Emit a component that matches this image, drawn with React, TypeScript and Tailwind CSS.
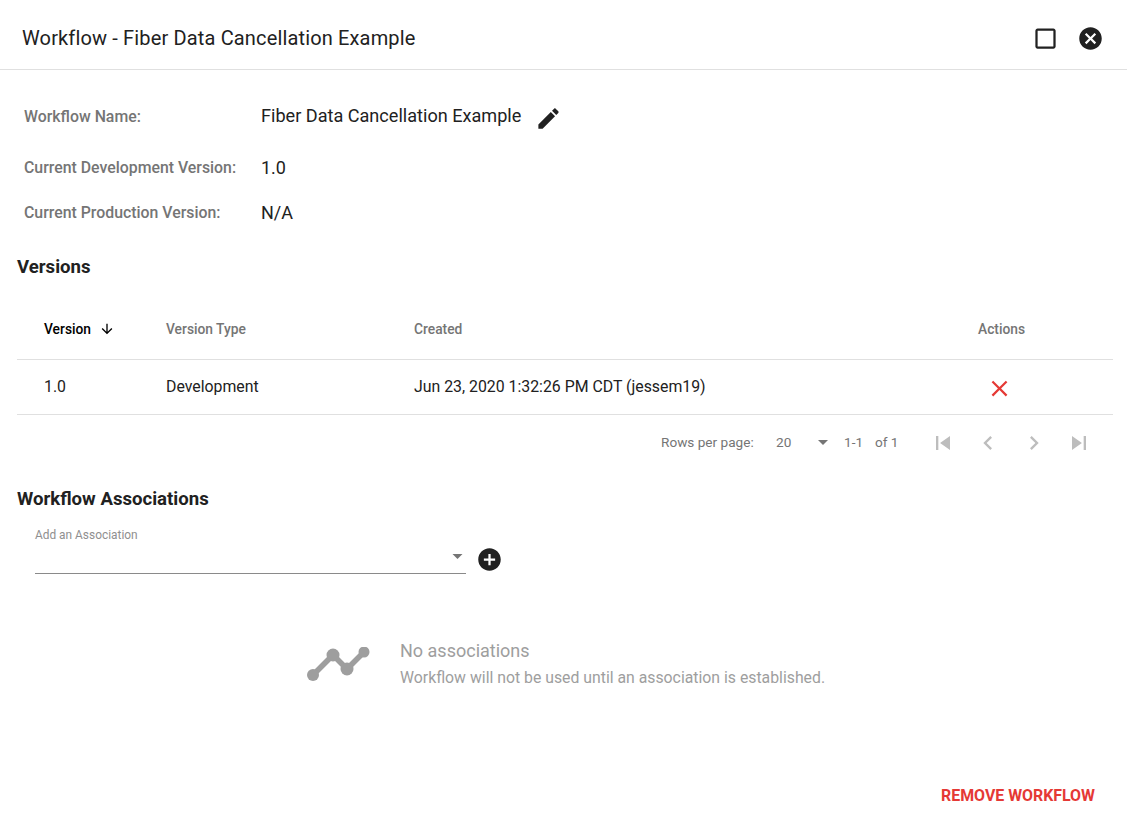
const icons = {
  edit: 'M3 17.25V21h3.75L17.81 9.94l-3.75-3.75L3 17.25zM20.71 7.04c.39-.39.39-1.02 0-1.41l-2.34-2.34c-.39-.39-1.02-.39-1.41 0l-1.83 1.83 3.75 3.75 1.83-1.83z',
  square: 'M19 5v14H5V5h14m0-2H5c-1.1 0-2 .9-2 2v14c0 1.1.9 2 2 2h14c1.1 0 2-.9 2-2V5c0-1.1-.9-2-2-2z',
  cancel: 'M12 2C6.47 2 2 6.47 2 12s4.47 10 10 10 10-4.47 10-10S17.53 2 12 2zm5 13.59L15.59 17 12 13.41 8.41 17 7 15.59 10.59 12 7 8.41 8.41 7 12 10.59 15.59 7 17 8.41 13.41 12 17 15.59z',
  close: 'M19 6.41L17.59 5 12 10.59 6.41 5 5 6.41 10.59 12 5 17.59 6.41 19 12 13.41 17.59 19 19 17.59 13.41 12z',
  arrowDown: 'M20 12l-1.41-1.41L13 16.17V4h-2v12.17l-5.58-5.59L4 12l8 8 8-8z',
  first: 'M6 6h2v12H6zm3.5 6l8.5 6V6z',
  prev: 'M15.41 7.41L14 6l-6 6 6 6 1.41-1.41L10.83 12z',
  next: 'M10 6L8.59 7.41 13.17 12l-4.58 4.59L10 18l6-6z',
  last: 'M6 18l8.5-6L6 6v12zM16 6v12h2V6h-2z',
  add: 'M12 2C6.48 2 2 6.48 2 12s4.48 10 10 10 10-4.48 10-10S17.52 2 12 2zm5 11h-4v4h-2v-4H7v-2h4V7h2v4h4v2z',
};

function Icon({ d, className }: { d: string; className: string }) {
  return (
    <svg viewBox="0 0 24 24" fill="currentColor" className={className}>
      <path d={d} />
    </svg>
  );
}

function InfoRow({ label, value, className }: { label: string; value: string; className: string }) {
  return (
    <div className={`flex items-center ${className}`}>
      <span className="w-[237px] text-[15.85px] font-medium text-[#757575]">{label}</span>
      <span className="-mt-[1px] text-[18px] text-[#212121]">{value}</span>
    </div>
  );
}

export default function App() {
  return (
    <div className="flex h-[830px] flex-col bg-white font-['Roboto',sans-serif] text-[#212121]">
      {/* Header */}
      <div className="flex h-[70px] shrink-0 items-center border-b border-[#e0e0e0] pl-[22px] pr-[23px] pt-[7px]">
        <h2 className="flex-1 text-[20px] leading-none tracking-[0.15px]">Workflow - Fiber Data Cancellation Example</h2>
        <Icon d={icons.square} className="h-[27px] w-[27px]" />
        <Icon d={icons.cancel} className="ml-[18px] h-[27px] w-[27px]" />
      </div>

      {/* Workflow details */}
      <div className="pl-[24px] pt-[30px]">
        <div className="flex h-[34px] items-center">
          <span className="w-[237px] text-[15.85px] font-medium text-[#757575]">Workflow Name:</span>
          <span className="-mt-[3px] text-[18.1px] text-[#212121]">Fiber Data Cancellation Example</span>
          <Icon d={icons.edit} className="ml-[14px] mt-[3px] h-[27px] w-[27px]" />
        </div>
        <InfoRow label="Current Development Version:" value="1.0" className="mt-[17px] h-[34px]" />
        <InfoRow label="Current Production Version:" value="N/A" className="mt-[11px] h-[34px]" />
      </div>

      {/* Versions */}
      <div className="mx-[14px] ml-[17px] mt-[25px]">
        <h3 className="text-[18.6px] font-bold leading-[24px] text-[#212121]">Versions</h3>
        <div className="mt-[9px] grid h-[72px] grid-cols-[122px_248px_564px_1fr] items-center border-b border-[#e0e0e0] pl-[27px] pt-[11px] text-[13.8px] font-medium text-[#757575]">
          <div className="flex items-center text-black">
            Version
            <Icon d={icons.arrowDown} className="ml-[8px] h-[16px] w-[16px]" />
          </div>
          <div>Version Type</div>
          <div>Created</div>
          <div>Actions</div>
        </div>
        <div className="grid h-[55px] grid-cols-[122px_248px_564px_1fr] items-center border-b border-[#e0e0e0] pl-[27px] text-[15.85px] text-[#212121]">
          <div>1.0</div>
          <div>Development</div>
          <div>Jun 23, 2020 1:32:26 PM CDT (jessem19)</div>
          <div>
            <Icon d={icons.close} className="mt-[3px] ml-[8px] h-[27px] w-[27px] text-[#e53935]" />
          </div>
        </div>
        {/* Pagination */}
        <div className="flex h-[55px] items-center pl-[644px] text-[13.6px] text-[#757575]">
          <span className="w-[115px]">Rows per page:</span>
          <span className="w-[41px]">20</span>
          <svg viewBox="0 0 10 5" fill="currentColor" className="ml-[1px] h-[5px] w-[10px]">
            <path d="M0 0l5 5 5-5z" />
          </svg>
          <span className="ml-[16px] w-[31px]">1-1</span>
          <span>of 1</span>
          <div className="ml-[30px] flex text-[#bdbdbd]">
            <Icon d={icons.first} className="h-[28px] w-[28px]" />
            <Icon d={icons.prev} className="ml-[17px] h-[28px] w-[28px]" />
            <Icon d={icons.next} className="ml-[18px] h-[28px] w-[28px]" />
            <Icon d={icons.last} className="ml-[17px] h-[28px] w-[28px]" />
          </div>
        </div>
      </div>

      {/* Associations */}
      <div className="ml-[17px] mt-[17px]">
        <h3 className="text-[18.6px] font-bold leading-[24px] text-[#212121]">Workflow Associations</h3>
        <div className="ml-[18px] mt-[15px] flex items-end">
          <div className="flex h-[48px] w-[431px] flex-col border-b border-[#8a8a8a]">
            <span className="text-[11.9px] leading-[18px] text-[#8f8f8f]">Add an Association</span>
            <div className="mt-[10px] flex justify-end pr-[3px]">
              <svg viewBox="0 0 10 5" fill="currentColor" className="h-[5px] w-[11px] text-[#757575]">
                <path d="M0 0l5 5 5-5z" />
              </svg>
            </div>
          </div>
          <Icon d={icons.add} className="mb-[1px] ml-[10px] h-[27px] w-[27px]" />
        </div>
      </div>

      {/* Empty state */}
      <div className="ml-[306px] mt-[64px] flex items-center text-[#9e9e9e]">
        <svg viewBox="0 0 66 36" className="h-[36px] w-[66px]">
          <polyline points="7,28 27,8 41,22 58,5" fill="none" stroke="currentColor" strokeWidth="5.5" />
          <circle cx="7" cy="28" r="6" fill="currentColor" />
          <circle cx="27" cy="8" r="6.5" fill="currentColor" />
          <circle cx="41" cy="22" r="6.5" fill="currentColor" />
          <circle cx="58" cy="5" r="5.5" fill="currentColor" />
        </svg>
        <div className="ml-[28px]">
          <div className="text-[18px] leading-[26px]">No associations</div>
          <div className="text-[15.8px] leading-[28px]">Workflow will not be used until an association is established.</div>
        </div>
      </div>

      {/* Footer */}
      <div className="mt-auto flex justify-end pb-[22px] pr-[32px]">
        <button className="text-[15.9px] font-bold uppercase text-[#e53935]">Remove Workflow</button>
      </div>
    </div>
  );
}
